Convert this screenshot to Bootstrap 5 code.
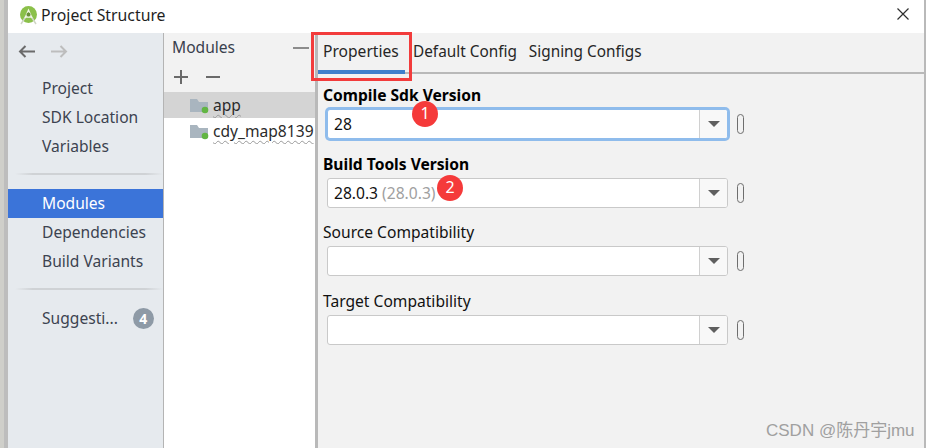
<!DOCTYPE html>
<html lang="en">
<head>
    <meta charset="UTF-8">
    <title>Project Structure</title>
    <link href="https://cdn.jsdelivr.net/npm/bootstrap@5.3.0/dist/css/bootstrap.min.css" rel="stylesheet">
    <style>
        html, body {
            width: 928px;
            height: 448px;
            overflow: hidden;
        }
        body {
            background-color: #fff;
            font-family: "Noto Sans", "Noto Sans CJK SC", sans-serif;
            font-size: 15.6px;
            color: #2b2b2b;
        }
        .ps-frame {
            position: relative;
            width: 928px;
            height: 448px;
            padding-left: 4px;
            padding-right: 2px;
            background: linear-gradient(90deg, #cfcfca 0, #cfcfca 4px, #fff 4px);
        }
        .ps-window {
            height: 100%;
            border-left: 4px solid #bdbdbd;
            border-right: 2px solid #b9b9b9;
            background-color: #fff;
        }
        .ps-title {
            height: 33px;
            padding-left: 11px;
            padding-right: 15px;
            padding-bottom: 2px;
            background-color: #fff;
        }
        .ps-title-text {
            margin-left: 3px;
            font-size: 15.8px;
            color: #1f1f1f;
        }
        .ps-close {
            margin-bottom: 3px;
        }
        .ps-body {
            height: 415px;
        }
        .ps-side {
            width: 156px;
            background-color: #e6eaee;
            border-right: 1px solid #b4b4b4;
            color: #3c4350;
        }
        .ps-nav-arrows {
            height: 36px;
            padding-left: 10px;
            gap: 16px;
        }
        .ps-side-gap {
            height: 5px;
        }
        .ps-side-item {
            height: 29px;
            padding-left: 34px;
            line-height: 29px;
        }
        .ps-side-item.is-active {
            background-color: #3b74d9;
            color: #fff;
        }
        .ps-side-sep {
            height: 2px;
            margin: 12px 0 14px 7px;
            background: linear-gradient(90deg, transparent, #cfd2d5 12%, #cfd2d5 88%, transparent);
        }
        .ps-count {
            width: 21px;
            height: 21px;
            margin-left: 15px;
            border-radius: 50%;
            background-color: #8e9aa6;
            color: #fff;
            font-size: 14px;
            font-weight: 700;
            line-height: 21px;
            text-align: center;
        }
        .ps-modules {
            width: 151px;
            background-color: #fff;
            border-right: 3px solid #b9b9b9;
            box-sizing: content-box;
        }
        .ps-mod-head {
            height: 28px;
            padding-top: 2px;
            padding-left: 8px;
            padding-right: 6px;
            background-color: #f2f2f2;
            color: #39404d;
        }
        .ps-mod-bar {
            height: 31px;
            padding-left: 10px;
            gap: 18px;
            background-color: #f2f2f2;
        }
        .ps-mod-row {
            height: 26px;
            padding-top: 1px;
            padding-left: 26px;
            gap: 3px;
            white-space: nowrap;
            overflow: hidden;
        }
        .ps-mod-row.is-active {
            background-color: #d4d4d4;
        }
        .ps-squiggle {
            text-decoration: underline wavy #9a9a9a 1px;
            text-underline-offset: 3px;
        }
        .ps-props {
            flex: 1;
            background-color: #f2f2f2;
        }
        .ps-tabs {
            height: 41px;
            border-bottom: 2px solid #b9b9b9;
            gap: 12px;
        }
        .ps-tab {
            height: 41px;
            padding: 0 5px;
            font-size: 15.35px;
            line-height: 36px;
            color: #262626;
        }
        .ps-tab.is-active {
            width: 87px;
            border-bottom: 4px solid #3f80cc;
            margin-right: -4px;
            font-size: 15.6px;
            white-space: nowrap;
        }
        .ps-tab-plain {
            padding-left: 0;
            padding-right: 0;
        }
        .ps-form {
            padding-left: 5px;
        }
        .ps-label {
            height: 22px;
            margin-top: 10px;
            line-height: 22px;
            color: #111;
        }
        .ps-label.is-strong {
            font-weight: 700;
            color: #000;
        }
        .ps-field-row {
            height: 36.5px;
            padding-top: 3px;
        }
        .ps-field {
            width: 401px;
            height: 30px;
            margin-left: 4px;
            border: 1px solid #c9c9c9;
            border-radius: 3px;
            background-color: #fff;
            overflow: hidden;
        }
        .ps-field.is-focus {
            border-color: #8fbcec;
            box-shadow: 0 0 0 2px #8fbcec;
        }
        .ps-field-value {
            flex: 1;
            padding-left: 6px;
            line-height: 28px;
            color: #111;
        }
        .ps-muted {
            color: #a0a0a0;
        }
        .ps-caret {
            width: 28px;
            border-left: 1px solid #d0d0d0;
            background-color: #f8f8f8;
        }
        .ps-caret::after {
            content: "";
            border-left: 6px solid transparent;
            border-right: 6px solid transparent;
            border-top: 6px solid #5f5f5f;
        }
        .ps-pill {
            width: 7px;
            height: 20px;
            margin-left: 9px;
            margin-top: 5px;
            border: 1px solid #6e6e6e;
            border-radius: 4px;
        }
        /* annotations drawn over the dialog */
        .ps-redbox {
            position: absolute;
            left: 311px;
            top: 32px;
            width: 101px;
            height: 49px;
            border: 3px solid #f23c3c;
        }
        .ps-marker {
            position: absolute;
            width: 26px;
            height: 26px;
            border-radius: 50%;
            background-color: #f53a3a;
            color: #fff;
            font-size: 16px;
            line-height: 24px;
            text-align: center;
        }
        .ps-marker-one {
            left: 412px;
            top: 101px;
        }
        .ps-marker-two {
            left: 437px;
            top: 175px;
        }
        .ps-mark {
            position: absolute;
            left: 766px;
            top: 418px;
            font-family: "Liberation Sans", "Noto Sans CJK SC", sans-serif;
            font-size: 17px;
            color: #a0a0a0;
            white-space: nowrap;
        }
    </style>
</head>
<body>
    <div class="ps-frame">
        <div class="ps-window d-flex flex-column">
            <div class="ps-title d-flex align-items-center">
                <svg width="19" height="19" viewBox="0 0 19 19">
                    <circle cx="9.5" cy="8.5" r="8.5" fill="#8bc04a"/>
                    <path d="M2 18 L6.5 11 M17 18 L12.5 11" stroke="#cfd6c4" stroke-width="1.5"/>
                    <path d="M6 12 L9.5 4 L13 12 M6.5 11 H12.5" stroke="#f2f6ea" stroke-width="1.3" fill="none"/>
                    <circle cx="9.5" cy="8.5" r="2" fill="#6a8f3a"/>
                </svg>
                <span class="ps-title-text">Project Structure</span>
                <svg class="ms-auto ps-close" width="12" height="12" viewBox="0 0 12 12">
                    <path d="M0.5 0.5 L11.5 11.5 M11.5 0.5 L0.5 11.5" stroke="#2f2f2f" stroke-width="1.2"/>
                </svg>
            </div>
            <div class="ps-body d-flex">
                <div class="ps-side flex-shrink-0">
                    <div class="ps-nav-arrows d-flex align-items-center">
                        <svg width="17" height="13" viewBox="0 0 17 13">
                            <path d="M17 6.5 H2 M7.5 1 L2 6.5 L7.5 12" stroke="#6b6b6b" stroke-width="2" fill="none"/>
                        </svg>
                        <svg width="17" height="13" viewBox="0 0 17 13">
                            <path d="M0 6.5 H15 M9.5 1 L15 6.5 L9.5 12" stroke="#bdbdbd" stroke-width="2" fill="none"/>
                        </svg>
                    </div>
                    <div class="ps-side-gap"></div>
                    <div class="ps-side-item">Project</div>
                    <div class="ps-side-item">SDK Location</div>
                    <div class="ps-side-item">Variables</div>
                    <div class="ps-side-sep"></div>
                    <div class="ps-side-item is-active">Modules</div>
                    <div class="ps-side-item">Dependencies</div>
                    <div class="ps-side-item">Build Variants</div>
                    <div class="ps-side-sep"></div>
                    <div class="ps-side-item d-flex align-items-center">Suggesti...<span class="ps-count">4</span></div>
                </div>
                <div class="ps-modules flex-shrink-0">
                    <div class="ps-mod-head d-flex align-items-center justify-content-between">
                        <span>Modules</span>
                        <svg width="16" height="2" viewBox="0 0 16 2"><rect width="16" height="2" fill="#8c8c8c"/></svg>
                    </div>
                    <div class="ps-mod-bar d-flex align-items-center">
                        <svg width="14" height="14" viewBox="0 0 14 14"><path d="M7 0 V14 M0 7 H14" stroke="#6a6a6a" stroke-width="2"/></svg>
                        <svg width="14" height="2" viewBox="0 0 14 2"><rect width="14" height="2" fill="#6a6a6a"/></svg>
                    </div>
                    <div class="ps-mod-row is-active d-flex align-items-center">
                        <svg width="20" height="16" viewBox="0 0 20 16">
                            <path d="M0 1 H7 L9 4 H18 V14 H0 Z" fill="#a9b5bf"/>
                            <circle cx="15" cy="12" r="3.3" fill="#62b543"/>
                        </svg>
                        <span class="ps-squiggle">app</span>
                    </div>
                    <div class="ps-mod-row d-flex align-items-center">
                        <svg width="20" height="16" viewBox="0 0 20 16">
                            <path d="M0 1 H7 L9 4 H18 V14 H0 Z" fill="#a9b5bf"/>
                            <circle cx="15" cy="12" r="3.3" fill="#62b543"/>
                        </svg>
                        <span class="ps-squiggle">cdy_map8139</span>
                    </div>
                </div>
                <div class="ps-props">
                    <div class="ps-tabs d-flex">
                        <div class="ps-tab is-active">Properties</div>
                        <div class="ps-tab ps-tab-plain">Default Config</div>
                        <div class="ps-tab ps-tab-plain">Signing Configs</div>
                    </div>
                    <div class="ps-form">
                        <div class="ps-label is-strong">Compile Sdk Version</div>
                        <div class="ps-field-row d-flex">
                            <div class="ps-field is-focus d-flex">
                                <div class="ps-field-value">28</div>
                                <div class="ps-caret d-flex align-items-center justify-content-center"></div>
                            </div>
                            <div class="ps-pill align-self-start"></div>
                        </div>
                        <div class="ps-label is-strong">Build Tools Version</div>
                        <div class="ps-field-row d-flex">
                            <div class="ps-field d-flex">
                                <div class="ps-field-value">28.0.3 <span class="ps-muted">(28.0.3)</span></div>
                                <div class="ps-caret d-flex align-items-center justify-content-center"></div>
                            </div>
                            <div class="ps-pill align-self-start"></div>
                        </div>
                        <div class="ps-label">Source Compatibility</div>
                        <div class="ps-field-row d-flex">
                            <div class="ps-field d-flex">
                                <div class="ps-field-value"></div>
                                <div class="ps-caret d-flex align-items-center justify-content-center"></div>
                            </div>
                            <div class="ps-pill align-self-start"></div>
                        </div>
                        <div class="ps-label">Target Compatibility</div>
                        <div class="ps-field-row d-flex">
                            <div class="ps-field d-flex">
                                <div class="ps-field-value"></div>
                                <div class="ps-caret d-flex align-items-center justify-content-center"></div>
                            </div>
                            <div class="ps-pill align-self-start"></div>
                        </div>
                    </div>
                </div>
            </div>
        </div>
        <div class="ps-redbox"></div>
        <div class="ps-marker ps-marker-one">1</div>
        <div class="ps-marker ps-marker-two">2</div>
        <div class="ps-mark">CSDN @陈丹宇jmu</div>
    </div>
    <script src="https://cdn.jsdelivr.net/npm/bootstrap@5.3.0/dist/js/bootstrap.bundle.min.js"></script>
</body>
</html>
